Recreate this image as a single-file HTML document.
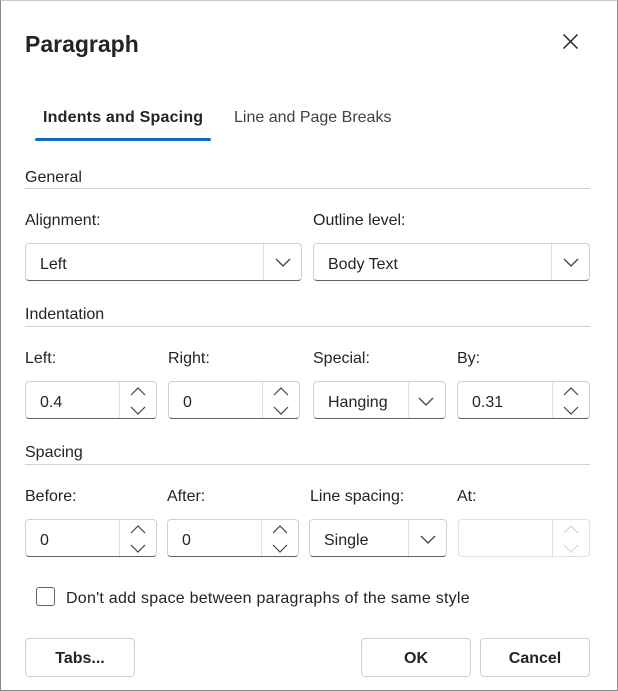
<!DOCTYPE html>
<html><head><style>
*{box-sizing:border-box;margin:0;padding:0}
body{width:618px;height:691px;background:#fff;font-family:"Liberation Sans",sans-serif;font-size:16px;color:#242424;position:relative;overflow:hidden}
.frame{position:absolute;left:0;top:0;width:618px;height:691px;border:1px solid #8a8a8a;border-top:1px solid #c8c8c8}
.a{position:absolute;white-space:nowrap}
.lbl{position:absolute;line-height:20px;margin-top:2px;white-space:nowrap}
.hr{position:absolute;left:25px;width:565px;height:1px;background:#d1d1d1}
.box{position:absolute;height:38px;border:1px solid #d1d1d1;border-bottom-color:#616161;border-radius:4px;background:#fff}
.box .t{position:absolute;left:14px;top:11px;line-height:20px}
.box .div{position:absolute;top:0;bottom:0;width:1px;background:#e0e0e0}
.box svg{position:absolute}
.dis{border-color:#e0e0e0}
.btn{position:absolute;top:638px;height:39px;border:1px solid #d1d1d1;border-radius:4px;text-align:center;line-height:39px;font-weight:bold;font-size:16px}
</style></head><body>
<div class="frame"></div>
<div class="a" style="left:25px;top:30px;font-size:23px;font-weight:bold;line-height:28px">Paragraph</div>
<svg class="a" style="left:562px;top:33px" width="17" height="17" viewBox="0 0 17 17"><path d="M1.5 1.5L15.5 15.5M15.5 1.5L1.5 15.5" stroke="#242424" stroke-width="1.5"/></svg>
<div class="lbl" style="left:43px;top:106px;font-weight:bold;letter-spacing:0.2px">Indents and Spacing</div>
<div class="lbl" style="left:234px;top:106px;color:#424242">Line and Page Breaks</div>
<div class="a" style="left:35px;top:138px;width:176px;height:3px;border-radius:2px;background:#0f6cbd"></div>

<div class="lbl" style="left:25px;top:166px">General</div>
<div class="hr" style="top:188px"></div>
<div class="lbl" style="left:25px;top:209px">Alignment:</div>
<div class="lbl" style="left:313px;top:209px">Outline level:</div>
<div class="box" style="left:25px;top:243px;width:277px"><span class="t">Left</span><div class="div" style="left:237px"></div><svg style="left:249px;top:13px" width="16" height="10"><path d="M1 2L8 9L15 2" fill="none" stroke="#424242" stroke-width="1.3"/></svg></div>
<div class="box" style="left:313px;top:243px;width:277px"><span class="t">Body Text</span><div class="div" style="left:237px"></div><svg style="left:249px;top:13px" width="16" height="10"><path d="M1 2L8 9L15 2" fill="none" stroke="#424242" stroke-width="1.3"/></svg></div>

<div class="lbl" style="left:25px;top:303px">Indentation</div>
<div class="hr" style="top:326px"></div>
<div class="lbl" style="left:25px;top:347px">Left:</div>
<div class="lbl" style="left:168px;top:347px">Right:</div>
<div class="lbl" style="left:313px;top:347px">Special:</div>
<div class="lbl" style="left:457px;top:347px">By:</div>
<div class="box" style="left:25px;top:381px;width:132px"><span class="t">0.4</span><div class="div" style="left:93px"></div><svg style="left:104px;top:4px" width="16" height="30"><path d="M1 9L8 2L15 9M1 21L8 28L15 21" fill="none" stroke="#424242" stroke-width="1.2"/></svg></div>
<div class="box" style="left:168px;top:381px;width:132px"><span class="t">0</span><div class="div" style="left:93px"></div><svg style="left:104px;top:4px" width="16" height="30"><path d="M1 9L8 2L15 9M1 21L8 28L15 21" fill="none" stroke="#424242" stroke-width="1.2"/></svg></div>
<div class="box" style="left:313px;top:381px;width:133px"><span class="t">Hanging</span><div class="div" style="left:94px"></div><svg style="left:104px;top:14px" width="16" height="10"><path d="M1 2L8 9L15 2" fill="none" stroke="#424242" stroke-width="1.3"/></svg></div>
<div class="box" style="left:457px;top:381px;width:133px"><span class="t">0.31</span><div class="div" style="left:94px"></div><svg style="left:105px;top:4px" width="16" height="30"><path d="M1 9L8 2L15 9M1 21L8 28L15 21" fill="none" stroke="#424242" stroke-width="1.2"/></svg></div>

<div class="lbl" style="left:25px;top:441px">Spacing</div>
<div class="hr" style="top:464px"></div>
<div class="lbl" style="left:25px;top:485px">Before:</div>
<div class="lbl" style="left:167px;top:485px">After:</div>
<div class="lbl" style="left:310px;top:485px">Line spacing:</div>
<div class="lbl" style="left:457px;top:485px">At:</div>
<div class="box" style="left:25px;top:519px;width:132px"><span class="t">0</span><div class="div" style="left:93px"></div><svg style="left:104px;top:4px" width="16" height="30"><path d="M1 9L8 2L15 9M1 21L8 28L15 21" fill="none" stroke="#424242" stroke-width="1.2"/></svg></div>
<div class="box" style="left:167px;top:519px;width:132px"><span class="t">0</span><div class="div" style="left:93px"></div><svg style="left:104px;top:4px" width="16" height="30"><path d="M1 9L8 2L15 9M1 21L8 28L15 21" fill="none" stroke="#424242" stroke-width="1.2"/></svg></div>
<div class="box" style="left:309px;top:519px;width:138px"><span class="t">Single</span><div class="div" style="left:98px"></div><svg style="left:110px;top:14px" width="16" height="10"><path d="M1 2L8 9L15 2" fill="none" stroke="#424242" stroke-width="1.3"/></svg></div>
<div class="box dis" style="left:458px;top:519px;width:132px"><div class="div" style="left:93px"></div><svg style="left:104px;top:4px" width="16" height="30"><path d="M1 9L8 2L15 9M1 21L8 28L15 21" fill="none" stroke="#d6d6d6" stroke-width="1.2"/></svg></div>

<div class="a" style="left:36px;top:587px;width:19px;height:19px;border:1px solid #616161;border-radius:3px"></div>
<div class="lbl" style="left:66px;top:587px;letter-spacing:0.25px">Don't add space between paragraphs of the same style</div>

<div class="btn" style="left:25px;width:110px">Tabs...</div>
<div class="btn" style="left:361px;width:110px">OK</div>
<div class="btn" style="left:480px;width:110px">Cancel</div>
</body></html>
